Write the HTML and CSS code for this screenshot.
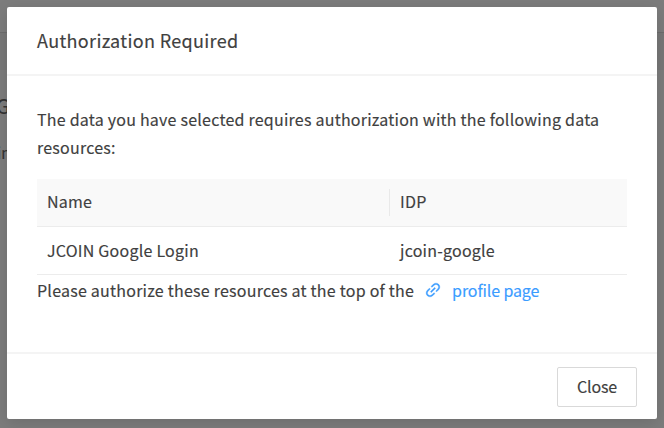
FILE: index.html
```html
<!DOCTYPE html>
<html lang="en">
<head>
<meta charset="utf-8">
<title>Authorization Required</title>
<link rel="stylesheet" href="styles.css">
</head>
<body>
<div class="page">
  <div class="page-top"></div>
  <div class="page-nav"></div>
  <div class="page-title">G</div>
  <div class="page-text">in</div>
</div>
<div class="overlay">
  <section class="modal" role="dialog">
    <header class="modal-header"><span class="title">Authorization Required</span></header>
    <div class="modal-body">
      <p class="text">The data you have selected requires authorization with the following data resources:</p>
      <table class="table">
        <thead><tr><th class="name">Name</th><th>IDP</th></tr></thead>
        <tbody><tr><td>JCOIN Google Login</td><td>jcoin-google</td></tr></tbody>
      </table>
      <p class="text note"><span>Please authorize these resources at the top of the</span><a class="link"><svg class="icon" viewBox="64 64 896 896" fill="currentColor"><path d="M574 665.4a8.03 8.03 0 00-11.3 0L446.5 781.6c-53.8 53.8-144.6 59.5-204 0-59.5-59.5-53.8-150.2 0-204l116.2-116.2c3.1-3.1 3.1-8.2 0-11.3l-39.8-39.8a8.03 8.03 0 00-11.3 0L191.4 526.5c-84.6 84.6-84.6 221.5 0 306s221.5 84.6 306 0l116.2-116.2c3.1-3.1 3.1-8.2 0-11.3L574 665.4zm258.6-474c-84.6-84.6-221.5-84.6-306 0L410.3 307.6a8.03 8.03 0 000 11.3l39.7 39.7c3.1 3.1 8.2 3.1 11.3 0l116.2-116.2c53.8-53.8 144.6-59.5 204 0 59.5 59.5 53.8 150.2 0 204L665.3 562.6a8.03 8.03 0 000 11.3l39.8 39.8c3.1 3.1 8.2 3.1 11.3 0l116.2-116.2c84.5-84.6 84.5-221.5 0-306.1zM610.1 372.3a8.03 8.03 0 00-11.3 0L372.3 598.7a8.03 8.03 0 000 11.3l39.6 39.6c3.1 3.1 8.2 3.1 11.3 0l226.4-226.4c3.1-3.1 3.1-8.2 0-11.3l-39.5-39.6z"/></svg><span>profile page</span></a></p>
    </div>
    <footer class="modal-footer"><button class="button" type="button">Close</button></footer>
  </section>
</div>
</body>
</html>
```
FILE: styles.css
```css
* { box-sizing: border-box; }
body {
  margin: 0;
  width: 664px;
  height: 428px;
  overflow: hidden;
  background: #7c7c7c;
  color: #404040;
  font-family: "Noto Sans CJK SC", sans-serif;
  font-size: 16px;
  letter-spacing: .23px;
  line-height: 28px;
  -webkit-text-stroke: .15px currentColor;
}
.page { height: 428px; color: #333; }
.page-top { height: 33px; border-bottom: 1px solid #6c6c6c; }
.page-nav { height: 37px; background: #777; }
.page-title { height: 37px; padding-top: 22px; margin-left: -4px; font-size: 20px; }
.page-text { padding-top: 32px; margin-left: -3px; font-size: 15px; }
.overlay { position: absolute; inset: 0; padding: 7px; }
.modal {
  display: flex;
  flex-direction: column;
  height: 412px;
  background: #fff;
  border-radius: 2px;
  box-shadow: 0 4px 16px rgba(0, 0, 0, .12);
}
.modal-header {
  height: 69px;
  padding: 19px 30px;
  border-bottom: 2px solid #f4f4f4;
  font-size: 18px;
  letter-spacing: .34px;
}
.modal-body { flex: 1; padding: 29px 27px 0 30px; }
.text { margin: 0; }
.table {
  width: 590px;
  margin-top: 18px;
  border-collapse: separate;
  border-spacing: 0;
  table-layout: fixed;
}
th, td {
  height: 48px;
  padding: 0 10px 1px;
  border-bottom: 1px solid #ececec;
  font-weight: 400;
  text-align: left;
}
th { background: #f9f9f9; padding-bottom: 3px; }
.name {
  width: 353px;
  background: linear-gradient(#e9e9e9, #e9e9e9) right center / 1px 27px no-repeat #f9f9f9;
}
.note { display: flex; align-items: center; margin-top: 1px; white-space: nowrap; }
.link { display: flex; align-items: center; color: #3b9cff; margin-left: 11px; letter-spacing: -.12px; }
.icon { width: 16px; height: 16px; margin-right: 11px; stroke: currentColor; stroke-width: 20; }
.modal-footer {
  display: flex;
  justify-content: flex-end;
  height: 67px;
  padding: 13px 20px;
  border-top: 2px solid #f4f4f4;
}
.button {
  width: 80px;
  height: 40px;
  padding: 0 0 2px;
  border: 1px solid #d9d9d9;
  border-radius: 2px;
  background: #fff;
  color: #404040;
  font: inherit;
  letter-spacing: -.15px;
}
```
